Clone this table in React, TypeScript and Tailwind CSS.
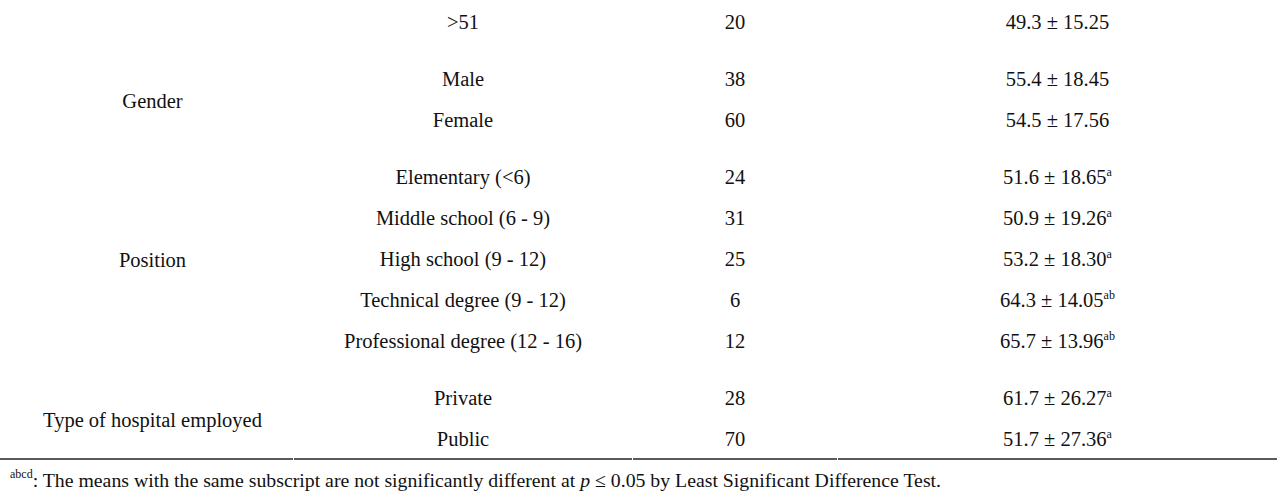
const groups = [
  {
    label: "",
    rows: [{ name: ">51", n: "20", mean: "49.3 ± 15.25", sup: "" }],
  },
  {
    label: "Gender",
    rows: [
      { name: "Male", n: "38", mean: "55.4 ± 18.45", sup: "" },
      { name: "Female", n: "60", mean: "54.5 ± 17.56", sup: "" },
    ],
  },
  {
    label: "Position",
    rows: [
      { name: "Elementary (<6)", n: "24", mean: "51.6 ± 18.65", sup: "a" },
      { name: "Middle school (6 - 9)", n: "31", mean: "50.9 ± 19.26", sup: "a" },
      { name: "High school (9 - 12)", n: "25", mean: "53.2 ± 18.30", sup: "a" },
      { name: "Technical degree (9 - 12)", n: "6", mean: "64.3 ± 14.05", sup: "ab" },
      { name: "Professional degree (12 - 16)", n: "12", mean: "65.7 ± 13.96", sup: "ab" },
    ],
  },
  {
    label: "Type of hospital employed",
    rows: [
      { name: "Private", n: "28", mean: "61.7 ± 26.27", sup: "a" },
      { name: "Public", n: "70", mean: "51.7 ± 27.36", sup: "a" },
    ],
  },
]

const App = () => {
  return (
    <div className="w-[1284px] h-[501px] bg-white text-[#111] font-['Liberation_Serif','Times_New_Roman',serif] overflow-hidden">
      <div className="w-[1277px] pt-[2px] flex flex-col gap-[16px]">
        {groups.map((g, gi) => (
          <div key={gi} className="flex gap-[1px]">
            <div className="w-[293px] pl-[12px] pt-[2px] flex items-center justify-center text-[20.5px]">{g.label}</div>
            <div className="flex-1 flex flex-col">
              {g.rows.map((r) => (
                <div key={r.name} className="grid grid-cols-[338px_204px_439px] gap-x-[1px] h-[41px] items-center text-center text-[20.5px] leading-[41px]">
                  <div>{r.name}</div>
                  <div>{r.n}</div>
                  <div>
                    {r.mean}
                    {r.sup && <sup className="text-[12px] relative -top-[8px]">{r.sup}</sup>}
                  </div>
                </div>
              ))}
            </div>
          </div>
        ))}
      </div>
      <div className="w-[1277px] grid grid-cols-[293px_338px_204px_439px] gap-x-[1px] mt-[-2px]">
        <div className="h-[2px] bg-[#5a5a5a]" />
        <div className="h-[2px] bg-[#5a5a5a]" />
        <div className="h-[2px] bg-[#5a5a5a]" />
        <div className="h-[2px] bg-[#5a5a5a]" />
      </div>
      <p className="pl-[10px] pt-[6px] text-[19.8px] leading-[28px]">
        <sup className="text-[12px] relative -top-[9px]">abcd</sup>: The means with the same subscript are not significantly different at <i>p</i> ≤ 0.05 by Least Significant Difference Test.
      </p>
    </div>
  )
}

export default App
